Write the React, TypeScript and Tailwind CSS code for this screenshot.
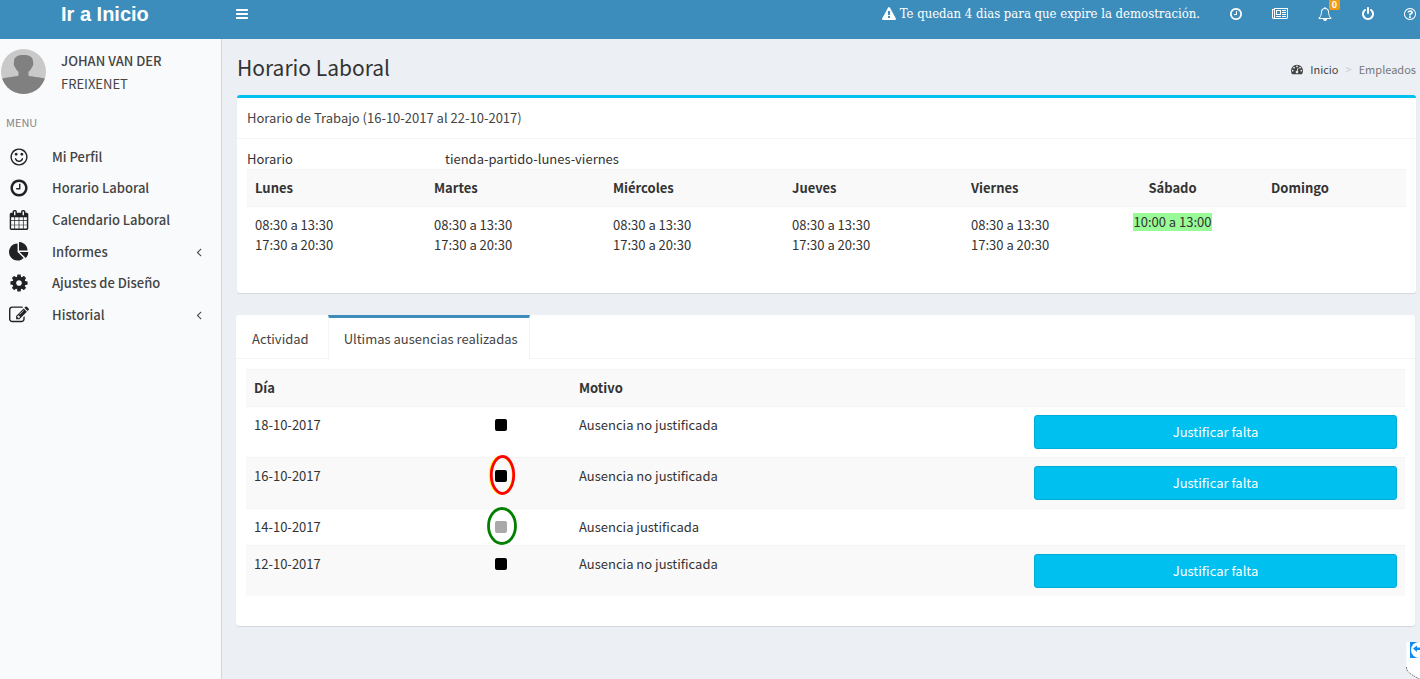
import { useState } from 'react';
import type { ReactNode } from 'react';

// ---------------------------------------------------------------------------
// Icons
// ---------------------------------------------------------------------------

const DISC =
  'q0 209-103 385.500t-279.500 279.500-385.500 103-385.500-103-279.500-279.500-103-385.500 103-385.500 279.500-279.500 385.500-103 385.500 103 279.500 279.500 103 385.500z';
const DOT =
  'q0-53-37.500-90.500t-90.500-37.500-90.500 37.500-37.500 90.500 37.500 90.500 90.500 37.500 90.500-37.500 37.500-90.500z';

const ICONS = {
  bars: 'M1664 1344v128q0 26-19 45t-45 19h-1408q-26 0-45-19t-19-45v-128q0-26 19-45t45-19h1408q26 0 45 19t19 45zm0-512v128q0 26-19 45t-45 19h-1408q-26 0-45-19t-19-45v-128q0-26 19-45t45-19h1408q26 0 45 19t19 45zm0-512v128q0 26-19 45t-45 19h-1408q-26 0-45-19t-19-45v-128q0-26 19-45t45-19h1408q26 0 45 19t19 45z',
  clock:
    'M1024 544v448q0 14-9 23t-23 9h-320q-14 0-23-9t-9-23v-64q0-14 9-23t23-9h224v-352q0-14 9-23t23-9h64q14 0 23 9t9 23zm416 352q0-148-73-273t-198-198-273-73-273 73-198 198-73 273 73 273 198 198 273 73 273-73 198-198 73-273zm224 0' +
    DISC,
  smile:
    'M1262 1075q-37 121-138 195t-228 74-228-74-138-195q-8-25 4-48.500t38-31.500q25-8 48.500 4t31.500 38q25 80 92.500 129.500t151.500 49.500 151.500-49.500 92.500-129.500q8-26 32-38t49-4 37 31.500 4 48.500zm-494-435' +
    'q0 53-37.500 90.500t-90.500 37.500-90.500-37.500-37.500-90.500 37.500-90.500 90.500-37.500 90.500 37.500 37.500 90.500zm512 0' +
    'q0 53-37.500 90.500t-90.500 37.500-90.500-37.500-37.500-90.500 37.500-90.500 90.500-37.500 90.500 37.500 37.500 90.500zm256 256' +
    'q0-130-51-248.500t-136.500-204-204-136.500-248.500-51-248.500 51-204 136.500-136.500 204-51 248.500 51 248.500 136.500 204 204 136.500 248.500 51 248.500-51 204-136.500 136.500-204 51-248.500zm128 0' +
    DISC,
  calendar:
    'M192 1664h288v-288h-288v288zm352 0h320v-288h-320v288zm-352-352h288v-320h-288v320zm352 0h320v-320h-320v320zm-352-384h288v-288h-288v288zm736 736h320v-288h-320v288zm-384-736h320v-288h-320v288zm768 736h288v-288h-288v288zm-384-352h320v-320h-320v320zm-352-864v-288q0-13-9.500-22.500t-22.500-9.500h-64q-13 0-22.500 9.500t-9.500 22.500v288q0 13 9.500 22.500t22.500 9.500h64q13 0 22.500-9.500t9.500-22.500zm736 864h288v-320h-288v320zm-384-384h320v-288h-320v288zm384 0h288v-288h-288v288zm32-480v-288q0-13-9.500-22.500t-22.500-9.500h-64q-13 0-22.500 9.500t-9.500 22.500v288q0 13 9.500 22.500t22.500 9.500h64q13 0 22.500-9.500t9.500-22.500zm384-64v1280q0 52-38 90t-90 38h-1408q-52 0-90-38t-38-90v-1280q0-52 38-90t90-38h128v-96q0-66 47-113t113-47h64q66 0 113 47t47 113v96h384v-96q0-66 47-113t113-47h64q66 0 113 47t47 113v96h128q52 0 90 38t38 90z',
  pie: 'M768 890l546 546q-106 108-247.500 168t-298.500 60q-209 0-385.500-103t-279.500-279.500-103-385.500 103-385.500 279.500-279.500 385.500-103v762zm187 6h773q0 157-60 298.500t-168 247.500zm709-128h-768v-768q209 0 385.500 103t279.500 279.500 103 385.500z',
  cog: 'M1152 896q0-106-75-181t-181-75-181 75-75 181 75 181 181 75 181-75 75-181zm512-109v222q0 12-8 23t-20 13l-185 28q-19 54-39 91 35 50 107 138 10 12 10 25t-9 23q-27 37-99 108t-94 71q-12 0-26-9l-138-108q-44 23-91 38-16 136-29 186-7 28-36 28h-222q-14 0-24.500-8.500t-11.500-21.500l-28-184q-49-16-90-37l-141 107q-10 9-25 9-14 0-25-11-126-114-165-168-7-10-7-23 0-12 8-23 15-21 51-66.500t54-70.500q-27-50-41-99l-183-27q-13-2-21-12.500t-8-23.500v-222q0-12 8-23t19-13l186-28q14-46 39-92-40-57-107-138-10-12-10-24 0-10 9-23 26-36 98.500-107.500t94.500-71.500q13 0 26 10l138 107q44-23 91-38 16-136 29-186 7-28 36-28h222q14 0 24.500 8.500t11.500 21.500l28 184q49 16 90 37l142-107q9-9 24-9 13 0 25 10 129 119 165 170 7 8 7 22 0 12-8 23-15 21-51 66.500t-54 70.500q26 50 41 98l183 28q13 2 21 12.500t8 23.500z',
  edit: 'M888 1184l116-116-152-152-116 116v56h96v96h56zm440-720q-16-16-33 1l-350 350q-17 17-1 33t33-1l350-350q17-17 1-33zm80 594v190q0 119-84.500 203.500t-203.500 84.500h-832q-119 0-203.500-84.500t-84.500-203.500v-832q0-119 84.500-203.500t203.500-84.500h832q63 0 117 25 15 7 18 23 3 17-9 29l-49 49q-14 14-32 8-23-6-45-6h-832q-66 0-113 47t-47 113v832q0 66 47 113t113 47h832q66 0 113-47t47-113v-126q0-13 9-22l64-64q15-15 35-7t20 29zm-96-738l288 288-672 672h-288v-288zm444 132l-92 92-288-288 92-92q28-28 68-28t68 28l152 152q28 28 28 68t-28 68z',
  angleLeft:
    'M1203 544q0 13-10 23l-393 393 393 393q10 10 10 23t-10 23l-50 50q-10 10-23 10t-23-10l-466-466q-10-10-10-23t10-23l466-466q10-10 23-10t23 10l50 50q10 10 10 23z',
  warning:
    'M1024 1375v-190q0-14-9.500-23.500t-22.500-9.500h-192q-13 0-22.500 9.500t-9.500 23.500v190q0 14 9.500 23.500t22.500 9.500h192q13 0 22.500-9.500t9.500-23.500zm-2-374l18-459q0-12-10-19-13-11-24-11h-220q-11 0-24 11-10 7-10 21l17 457q0 10 10 16.500t24 6.500h185q14 0 23.500-6.500t10.500-16.500zm-14-934l768 1408q35 63-2 126-17 29-46.500 46t-63.500 17h-1536q-34 0-63.500-17t-46.500-46q-37-63-2-126l768-1408q17-31 47-49t65-18 65 18 47 49z',
  power:
    'M1664 896q0 156-61 298t-164 245-245 164-298 61-298-61-245-164-164-245-61-298q0-182 80.500-343t226.500-270q43-32 95.500-25t83.500 50q32 42 24.500 94.500t-49.500 84.500q-98 74-151.500 181t-53.500 228q0 104 40.500 198.500t109.500 163.500 163.500 109.500 198.500 40.500 198.500-40.500 163.500-109.500 109.500-163.500 40.500-198.500q0-121-53.500-228t-151.500-181q-42-32-49.500-84.500t24.500-94.500q31-43 84-50t95 25q146 109 226.500 270t80.500 343zm-640-768v640q0 52-38 90t-90 38-90-38-38-90v-640q0-52 38-90t90-38 90 38 38 90z',
  news: 'M1024 512h-384v384h384v-384zm128 640v128h-640v-128h640zm0-768v640h-640v-640h640zm640 768v128h-512v-128h512zm0-256v128h-512v-128h512zm0-256v128h-512v-128h512zm0-256v128h-512v-128h512zm-1536 960v-960h-128v960q0 26 19 45t45 19 45-19 19-45zm1664 0v-1088h-1536v1088q0 33-11 64h1483q26 0 45-19t19-45zm128-1216v1216q0 80-56 136t-136 56h-1664q-80 0-136-56t-56-136v-1088h256v-128h1792z',
  bell: 'M912 1696q0-16-16-16-59 0-101.500-42.500t-42.500-101.500q0-16-16-16t-16 16q0 73 51.500 124.500t124.500 51.500q16 0 16-16zm-666-288h1300q-266-300-266-832 0-51-24-105t-69-103-121.500-80.500-169.500-31.500-169.500 31.500-121.500 80.500-69 103-24 105q0 532-266 832zm1482 0q0 52-38 90t-90 38h-448q0 106-75 181t-181 75-181-75-75-181h-448q-52 0-90-38t-38-90q50-42 91-88t85-119.500 74.500-158.500 50-206 19.500-260q0-152 117-282.500t307-158.500q-8-19-8-39 0-40 28-68t68-28 68 28 28 68q0 20-8 39 190 28 307 158.500t117 282.500q0 139 19.500 260t50 206 74.500 158.500 85 119.500 91 88z',
  question:
    'M1008 1200v160q0 14-9 23t-23 9h-160q-14 0-23-9t-9-23v-160q0-14 9-23t23-9h160q14 0 23 9t9 23zm256-496q0 50-15 90t-45.500 69-52 44-59.500 36q-32 18-46.500 28t-26 24-11.500 29v32q0 14-9 23t-23 9h-160q-14 0-23-9t-9-23v-68q0-35 10.500-64.500t24-47.500 39-35.500 41-25.500 44.500-21q53-25 75-43t22-49q0-42-43.500-71.500t-95.500-29.500q-56 0-95 27-29 20-80 83-9 12-25 12-11 0-19-6l-108-82q-10-7-12-20t5-23q122-192 349-192 129 0 238.500 89.500t109.500 214.500zm-368-448q-130 0-248.500 51t-204 136.500-136.500 204-51 248.500 51 248.500 136.500 204 204 136.500 248.500 51 248.500-51 204-136.500 136.500-204 51-248.500-51-248.500-136.500-204-204-136.500-248.500-51zm768 640' +
    DISC,
  gauge:
    `M384 1152${DOT}m192-448${DOT}m428 481l101-382q6-26-7.500-48.500t-38.500-29.500-48 6.500-30 39.500l-101 382q-60 5-107 43.500t-63 98.500q-20 77 20 146t117 89 146-20 89-117q16-60-6-117t-72-91zm660-33${DOT}m-640-640${DOT}m448 192${DOT}m320 448` +
    'q0 261-141 483-19 29-54 29h-1402q-35 0-54-29-141-221-141-483 0-182 71-348t191-286 286-191 348-71 348 71 286 191 191 286 71 348z',
};

type IconName = keyof typeof ICONS;

// Glyphs come in three widths on the same 1792 unit em
const VIEW_BOX = {
  narrow: '128 0 1536 1792',
  normal: '0 0 1792 1792',
  wide: '0 0 2048 1792',
};

function Icon({
  name,
  box = 'normal',
  className = 'size-3.5',
}: {
  name: IconName;
  box?: keyof typeof VIEW_BOX;
  className?: string;
}) {
  return (
    <svg viewBox={VIEW_BOX[box]} className={`shrink-0 ${className}`} fill="currentColor" aria-hidden="true">
      <path d={ICONS[name]} />
    </svg>
  );
}

// ---------------------------------------------------------------------------
// Data
// ---------------------------------------------------------------------------

const MENU: { icon: IconName; label: string; sub?: boolean }[] = [
  { icon: 'smile', label: 'Mi Perfil' },
  { icon: 'clock', label: 'Horario Laboral' },
  { icon: 'calendar', label: 'Calendario Laboral' },
  { icon: 'pie', label: 'Informes', sub: true },
  { icon: 'cog', label: 'Ajustes de Diseño' },
  { icon: 'edit', label: 'Historial', sub: true },
];

const WEEKDAYS = ['Lunes', 'Martes', 'Miércoles', 'Jueves', 'Viernes'];

type Mark = 'red' | 'green';

const ABSENCES: { day: string; justified: boolean; mark?: Mark }[] = [
  { day: '18-10-2017', justified: false },
  { day: '16-10-2017', justified: false, mark: 'red' },
  { day: '14-10-2017', justified: true, mark: 'green' },
  { day: '12-10-2017', justified: false },
];

// ---------------------------------------------------------------------------
// Header and sidebar
// ---------------------------------------------------------------------------

function Header() {
  return (
    <header className="flex h-[39px] items-start bg-[#3c8dbc] text-white">
      <div className="flex h-7 w-[221px] shrink-0 items-center pl-[61px]">
        <a href="#inicio" className="font-['Liberation_Sans',sans-serif] text-xl font-bold leading-7">
          Ir a Inicio
        </a>
      </div>
      <div className="flex h-7 flex-1 items-center pl-[15px] pr-1">
        <button type="button" aria-label="Mostrar u ocultar menú">
          <Icon name="bars" box="narrow" className="h-3.5 w-3" />
        </button>
        <nav className="ml-auto flex items-center gap-[30px]">
          <span className="flex items-center gap-1 font-['DejaVu_Serif_Condensed','DejaVu_Serif',serif] text-[13px] leading-5">
            <Icon name="warning" />
            Te quedan 4 dias para que expire la demostración.
          </span>
          <a href="#fichar" aria-label="Fichar">
            <Icon name="clock" box="narrow" className="h-3.5 w-3" />
          </a>
          <a href="#noticias" aria-label="Noticias">
            <Icon name="news" box="wide" className="h-3.5 w-4" />
          </a>
          <a href="#avisos" aria-label="Avisos" className="relative">
            <Icon name="bell" />
            <span className="absolute -top-2 left-[11px] h-[11px] w-[11px] rounded-xs bg-[#f39c12] text-center text-[9px] font-bold leading-[11px]">
              0
            </span>
          </a>
          <a href="#salir" aria-label="Salir">
            <Icon name="power" box="narrow" className="h-3.5 w-3" />
          </a>
          <a href="#ayuda" aria-label="Ayuda">
            <Icon name="question" box="narrow" className="h-3.5 w-3" />
          </a>
        </nav>
      </div>
    </header>
  );
}

function Avatar() {
  return (
    <svg viewBox="0 0 45 45" className="size-[45px] shrink-0" role="img" aria-label="Johan Van Der">
      <defs>
        <clipPath id="avatar-clip">
          <circle cx="22.5" cy="22.5" r="22.5" />
        </clipPath>
      </defs>
      <g clipPath="url(#avatar-clip)">
        <rect width="45" height="45" fill="#c9c9c9" />
        <path
          d="M22.500 6C28 6 32 7.500 32 12.500c.8 2-.2 5-1.200 6-.8 2-2 3.300-3.300 4.300v3.700c1 1.200 12 1.500 17.500 3.500v15H0V30c5.500-2 16.500-2.300 17.500-3.500v-3.700c-1.300-1-2.500-2.300-3.300-4.300-1-1-2-4-1.200-6C13 7.500 17 6 22.500 6z"
          fill="#808080"
        />
      </g>
    </svg>
  );
}

function Sidebar() {
  return (
    <aside className="w-[222px] shrink-0 border-r border-[#d2d6de] bg-[#f9fafc] text-[#444]">
      <div className="flex gap-[15px] pl-px pt-2.5">
        <Avatar />
        <div className="flex flex-col gap-[3px] pt-0.5 leading-5">
          <p className="font-medium">JOHAN VAN DER</p>
          <p>FREIXENET</p>
        </div>
      </div>
      <h4 className="mt-[18px] pl-1.5 text-[11px] leading-5 text-[#848484]">MENU</h4>
      <ul className="mt-[9px] grid h-[190px] auto-rows-fr">
        {MENU.map((item) => (
          <li key={item.label}>
            <a href="#menu" className="flex h-full items-center pl-[9px] pr-[15px] font-medium">
              <Icon name={item.icon} className="size-5 text-[#222]" />
              <span className="pl-[23px]">{item.label}</span>
              {item.sub && <Icon name="angleLeft" className="ml-auto size-3.5" />}
            </a>
          </li>
        ))}
      </ul>
    </aside>
  );
}

// ---------------------------------------------------------------------------
// Schedule box
// ---------------------------------------------------------------------------

function Schedule() {
  return (
    <section className="rounded-[3px] border-t-[3px] border-[#00c0ef] bg-white shadow-[0_1px_1px_rgba(0,0,0,0.1)]">
      <h3 className="border-b border-[#f4f4f4] p-2.5 text-[#444]">
        Horario de Trabajo (16-10-2017 al 22-10-2017)
      </h3>
      <div className="p-2.5">
        <dl className="flex">
          <dt className="w-[198px]">Horario</dt>
          <dd>tienda-partido-lunes-viernes</dd>
        </dl>
        <table className="w-full table-fixed">
          <colgroup>
            <col className="w-[179px]" />
            <col className="w-[179px]" />
            <col className="w-[179px]" />
            <col className="w-[179px]" />
            <col className="w-[164px]" />
            <col className="w-[91px]" />
            <col className="w-[164px]" />
            <col className="w-[24px]" />
          </colgroup>
          <thead>
            <tr className="border-t border-[#f4f4f4] bg-[#f9f9f9]">
              {WEEKDAYS.map((day) => (
                <th key={day} className="p-2 text-left">
                  {day}
                </th>
              ))}
              <th className="p-2 text-center">Sábado</th>
              <th className="p-2 text-center">Domingo</th>
              <td />
            </tr>
          </thead>
          <tbody>
            <tr className="border-t border-[#f4f4f4] align-top">
              {WEEKDAYS.map((day) => (
                <td key={day} className="px-2 pb-7 pt-2">
                  08:30 a 13:30
                  <br />
                  17:30 a 20:30
                </td>
              ))}
              <td className="whitespace-nowrap pt-[5px] text-center">
                <span className="inline-block bg-[#98fb98] leading-[18px]">10:00 a 13:00</span>
              </td>
              <td />
              <td />
            </tr>
          </tbody>
        </table>
      </div>
    </section>
  );
}

// ---------------------------------------------------------------------------
// Tabs
// ---------------------------------------------------------------------------

function Tab({ active, onClick, children }: { active: boolean; onClick: () => void; children: ReactNode }) {
  return (
    <button
      type="button"
      role="tab"
      aria-selected={active}
      onClick={onClick}
      className={
        active
          ? '-mb-px border-x border-t-[3px] border-x-[#f4f4f4] border-t-[#3c8dbc] bg-white pb-2.5 pl-[15px] pr-[11px] pt-[11px] text-[#444]'
          : 'border-x border-t-[3px] border-transparent pb-[9px] pl-[15px] pr-[11px] pt-[11px] text-[#444]'
      }
    >
      {children}
    </button>
  );
}

// Hand-drawn ring around a status square
function Ring({ mark }: { mark: Mark }) {
  return mark === 'red' ? (
    <svg viewBox="0 0 28 40" className="absolute -left-[7px] -top-[15px] h-10 w-7" aria-hidden="true">
      <ellipse cx="13.500" cy="20" rx="11.500" ry="18.500" fill="none" stroke="#ff0" strokeWidth="2.500" />
      <ellipse cx="14.500" cy="20" rx="11.200" ry="18.500" fill="none" stroke="#f00" strokeWidth="2.800" />
    </svg>
  ) : (
    <svg viewBox="0 0 32 40" className="absolute -left-2 -top-3.5 h-10 w-8" aria-hidden="true">
      <ellipse cx="15" cy="19" rx="13.500" ry="17.500" fill="none" stroke="#008000" strokeWidth="2.800" />
    </svg>
  );
}

function Absences() {
  return (
    <table className="w-full table-fixed text-left">
      <colgroup>
        <col className="w-[241px]" />
        <col className="w-[84px]" />
        <col className="w-[455px]" />
        <col className="w-[379px]" />
      </colgroup>
      <thead>
        <tr className="border-t border-[#f4f4f4] bg-[#f9f9f9]">
          <th className="p-2">Día</th>
          <td />
          <th className="p-2">Motivo</th>
          <td />
        </tr>
      </thead>
      <tbody>
        {ABSENCES.map((row) => (
          <tr key={row.day} className="border-t border-[#f4f4f4] align-top even:bg-[#f9f9f9]">
            <td className="p-2">{row.day}</td>
            <td className="px-2 py-3">
              <div className="relative size-3">
                <div className={`size-3 rounded-xs ${row.justified ? 'bg-[#a9a9a9]' : 'bg-black'}`} />
                {row.mark && <Ring mark={row.mark} />}
              </div>
            </td>
            <td className="p-2">{row.justified ? 'Ausencia justificada' : 'Ausencia no justificada'}</td>
            <td className={row.justified ? '' : 'p-2'}>
              {!row.justified && (
                <button
                  type="button"
                  className="block h-[34px] w-full rounded-[3px] border border-[#00acd6] bg-[#00c0ef] text-center text-white"
                >
                  Justificar falta
                </button>
              )}
            </td>
          </tr>
        ))}
      </tbody>
    </table>
  );
}

function ActivityTabs() {
  const [tab, setTab] = useState<'actividad' | 'ausencias'>('ausencias');

  return (
    <section className="-ml-px mr-px mt-[22px] rounded-[3px] bg-white shadow-[0_1px_1px_rgba(0,0,0,0.1)]">
      <div role="tablist" className="flex gap-[7px] border-b border-[#f4f4f4]">
        <Tab active={tab === 'actividad'} onClick={() => setTab('actividad')}>
          Actividad
        </Tab>
        <Tab active={tab === 'ausencias'} onClick={() => setTab('ausencias')}>
          Ultimas ausencias realizadas
        </Tab>
      </div>
      <div role="tabpanel" className="px-2.5 pb-[30px] pt-2.5">
        {tab === 'ausencias' && <Absences />}
      </div>
    </section>
  );
}

// Remote support badge, docked to the window's corner
function SupportBadge() {
  return (
    <svg viewBox="0 0 14 37" className="fixed bottom-0 right-0 h-[37px] w-3.5" aria-hidden="true">
      <path d="M0.500 0h13.500v37q-9-4-12-7-1.500-1.500-1.500-4z" fill="#fff" />
      <path d="M0.500 25q0 3 2 5 3 3 11 7" fill="none" stroke="#555" strokeDasharray="1.500 1" />
      <rect x="4" width="10" height="16" fill="#0d8bf2" />
      <circle cx="13" cy="8" r="8" fill="#fff" />
      <path d="M7 6.500l4-3v2h3v2.500h-3v2z" fill="#0d8bf2" />
    </svg>
  );
}

export default function App() {
  return (
    <div className="flex min-h-screen flex-col bg-[#ecf0f5] font-['Noto_Sans_CJK_SC',sans-serif] text-[13px] leading-5 text-[#333]">
      <Header />
      <div className="flex flex-1">
        <Sidebar />
        <main className="min-w-0 flex-1 pl-[15px] pr-1 pt-3.5">
          <div className="mb-3.5 flex items-start justify-between">
            <h1 className="text-[21px] leading-7">Horario Laboral</h1>
            <ol className="flex items-center gap-[7px] pt-1.5 text-[11px] leading-5">
              <li>
                <a href="#inicio" className="flex items-center gap-[7px] text-[#444]">
                  <Icon name="gauge" className="size-3" />
                  Inicio
                </a>
              </li>
              <li className="text-[#ccc]">&gt;</li>
              <li className="text-[#777]">Empleados</li>
            </ol>
          </div>
          <Schedule />
          <ActivityTabs />
        </main>
      </div>
      <SupportBadge />
    </div>
  );
}
